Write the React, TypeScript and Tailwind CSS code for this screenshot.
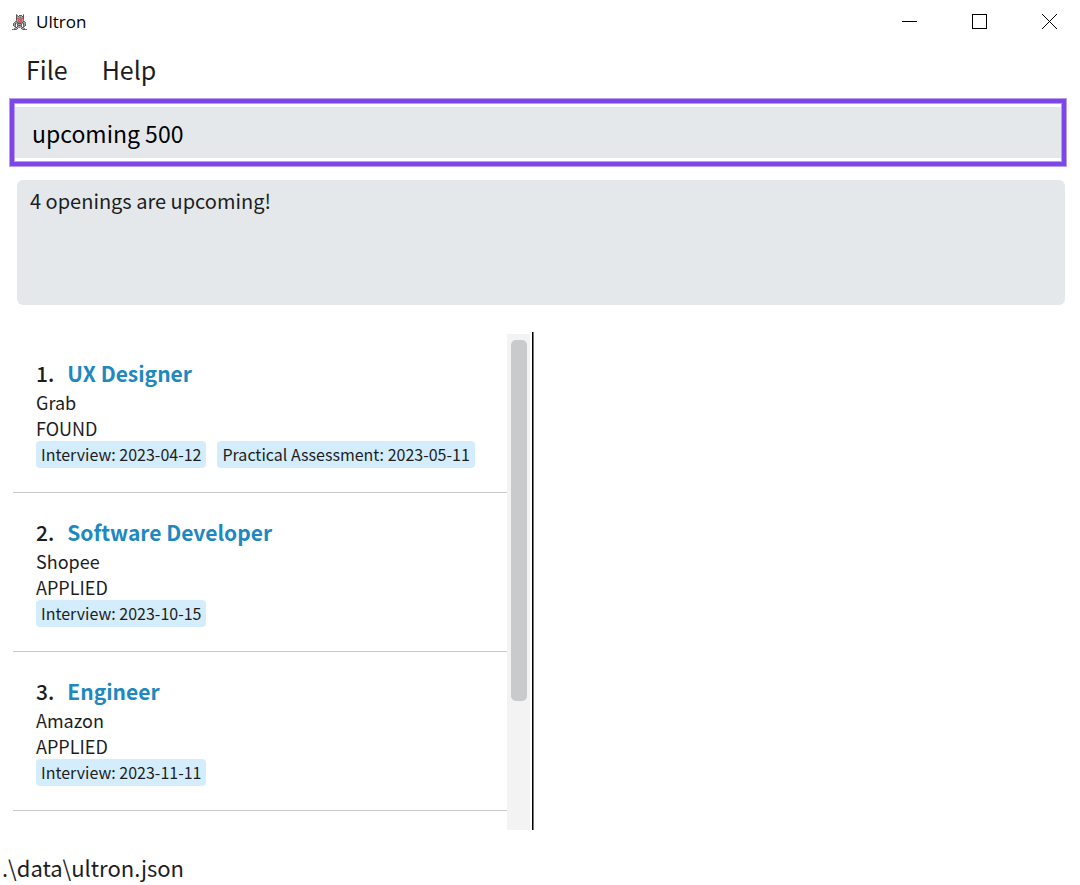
type Opening = {
  position: string;
  company: string;
  status: string;
  dates: string[];
};

const openings: Opening[] = [
  {
    position: 'UX Designer',
    company: 'Grab',
    status: 'FOUND',
    dates: ['Interview: 2023-04-12', 'Practical Assessment: 2023-05-11'],
  },
  {
    position: 'Software Developer',
    company: 'Shopee',
    status: 'APPLIED',
    dates: ['Interview: 2023-10-15'],
  },
  {
    position: 'Engineer',
    company: 'Amazon',
    status: 'APPLIED',
    dates: ['Interview: 2023-11-11'],
  },
];

const robotPixels = [
  '....m......m...',
  '....dm.ddd.d...',
  '....dgdgggdd...',
  '....dggmmggd...',
  '....drrgmrrd...',
  '....dgrrrrgm...',
  '....mgrgrrgm...',
  '...mdgrrrrgdm..',
  '..mggdmrrmdggm.',
  '.mgdgmdddmgdgm.',
  '.dgd.dgggd.dgd.',
  '.dgm.mdddm.mgd.',
  '..md.dgggd.dm..',
  '...mdggmggdm...',
  '..mggd...dggm..',
  'dmddm.....mddmd',
];

const pixelColors: Record<string, string> = {
  d: '#585858',
  m: '#7d7d7d',
  g: '#a3a3a3',
  r: '#e0555a',
};

function RobotIcon() {
  return (
    <svg width="15" height="16" viewBox="0 0 15 16" shapeRendering="crispEdges" aria-hidden="true">
      {robotPixels.flatMap((row, y) =>
        row.split('').map((c, x) =>
          pixelColors[c] ? (
            <rect key={`${x}-${y}`} x={x} y={y} width="1" height="1" fill={pixelColors[c]} />
          ) : null,
        ),
      )}
    </svg>
  );
}

function TitleBar() {
  return (
    <header className="flex h-11 items-center justify-between pr-[23px] pl-3">
      <div className="flex items-center gap-[9px]">
        <RobotIcon />
        <h1 className="font-['Open_Sans',sans-serif] text-[17px] leading-6 text-black">Ultron</h1>
      </div>
      <div className="flex gap-[55px] pb-0.5 text-black">
        <button type="button" aria-label="Minimize">
          <svg width="15" height="15" viewBox="0 0 15 15" fill="none" stroke="currentColor">
            <path d="M0 7.5H15" />
          </svg>
        </button>
        <button type="button" aria-label="Maximize">
          <svg width="15" height="15" viewBox="0 0 15 15" fill="none" stroke="currentColor">
            <rect x="0.5" y="0.5" width="14" height="14" />
          </svg>
        </button>
        <button type="button" aria-label="Close">
          <svg width="15" height="15" viewBox="0 0 15 15" fill="none" stroke="currentColor">
            <path d="M0 0L15 15M15 0L0 15" />
          </svg>
        </button>
      </div>
    </header>
  );
}

function OpeningCard({ opening, index }: { opening: Opening; index: number }) {
  return (
    <li className="border-b border-[#c8c8c8] px-[23px] pt-[23px] pb-6">
      <h2 className="flex gap-[13px] text-[21px] leading-8 font-medium">
        <span>{index}.</span>
        <span className="font-bold text-[#1e88c0]">{opening.position}</span>
      </h2>
      <p className="text-[18px] leading-[26px]">{opening.company}</p>
      <p className="text-[18px] leading-[26px]">{opening.status}</p>
      <ul className="flex gap-[11px]">
        {opening.dates.map((date) => (
          <li key={date} className="rounded-sm bg-[#d4edfc] px-[5px] text-[16px] leading-[27px] whitespace-nowrap">
            {date}
          </li>
        ))}
      </ul>
    </li>
  );
}

export default function App() {
  return (
    <div className="flex min-h-screen flex-col bg-white font-['Noto_Sans_CJK_SC',sans-serif] text-[#1d1d1f]">
      <TitleBar />
      <nav className="flex gap-[34px] px-[26px] pt-[7px] pb-3 text-[25px] leading-9">
        <button type="button">File</button>
        <button type="button">Help</button>
      </nav>
      <div className="mr-[14px] ml-[10px] border-4 border-[#7c47e8] py-1 ring-1 ring-[#b99df3] inset-ring-1 inset-ring-[#b99df3]">
        <input
          type="text"
          aria-label="Command"
          defaultValue="upcoming 500"
          className="block h-[51px] w-full border-x border-[#b99df3] bg-[#e4e8eb] px-[17px] text-[23px] text-black outline-none"
        />
      </div>
      <output className="mt-[14px] mr-[15px] ml-[17px] block h-[125px] rounded-md bg-[#e4e8eb] px-[13px] py-[7px] text-[20px] leading-7">
        4 openings are upcoming!
      </output>
      <main className="mt-[27px] flex flex-1">
        <section
          aria-label="Openings"
          className="flex w-1/2 max-w-[533px] border-r border-black pt-0.5 pr-0.5 pl-[13px] shadow-[1px_0_0_#777777]"
        >
          <ol className="flex-1">
            {openings.map((opening, i) => (
              <OpeningCard key={opening.position} opening={opening} index={i + 1} />
            ))}
          </ol>
          <div className="w-[23px] bg-[#f3f3f3] pt-1.5 pr-[3px] pl-1">
            <div className="h-[361px] rounded-[5px] bg-[#c9cacc]" />
          </div>
        </section>
        <section aria-label="Details" className="flex-1" />
      </main>
      <footer className="px-0.5 pt-[19px] text-[22px] leading-9">.\data\ultron.json</footer>
    </div>
  );
}
